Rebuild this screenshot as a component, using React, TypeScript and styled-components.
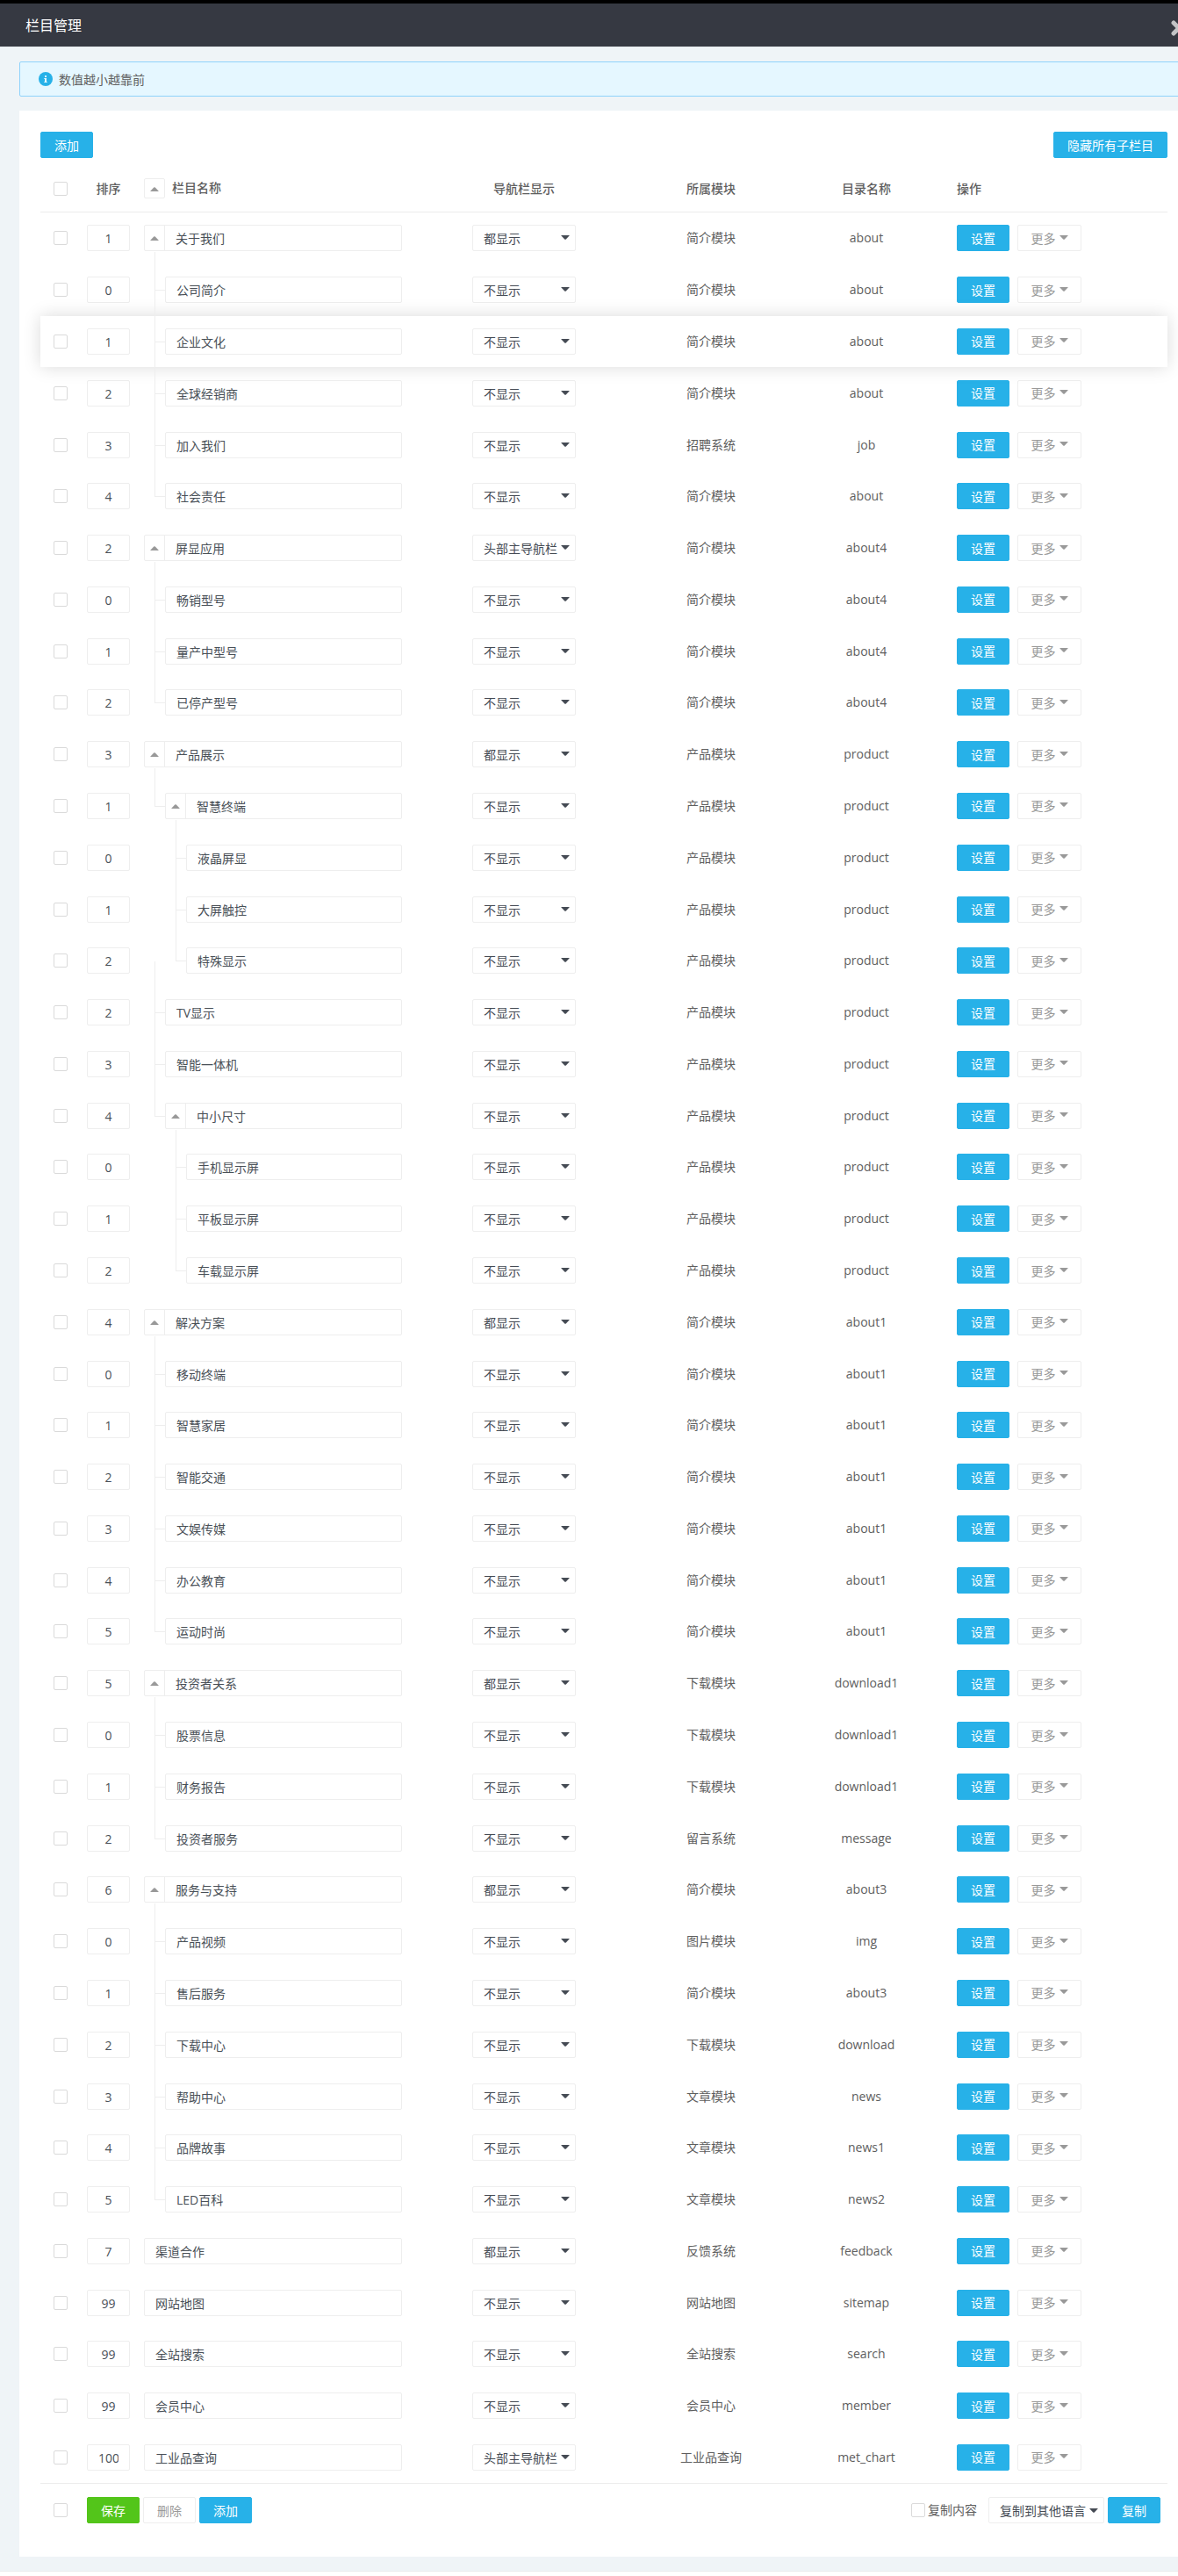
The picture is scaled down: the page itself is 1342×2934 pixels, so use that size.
import React from 'react';
import styled, { createGlobalStyle } from 'styled-components';

const BLUE = '#27b1e8';
const LINE = '#eeeeee';
const ROW_H = 58.78125;

const GlobalStyle = createGlobalStyle`
  *, *::before, *::after { box-sizing: border-box; }
  body {
    margin: 0;
    background: #fff;
    color: #5e5e5e;
    font: 14px/20px "Open Sans", "Noto Sans CJK SC", sans-serif;
    overflow: hidden;
  }
`;

const Page = styled.div`
  width: 1342px;
  height: 2934px;
  overflow: hidden;
`;

const TopBar = styled.header`
  display: flex;
  align-items: center;
  justify-content: space-between;
  height: 53px;
  padding: 1px 0 0 29px;
  border-top: 4px solid #000;
  background: #363942;
  color: #fff;
  font-size: 16px;
`;

const CloseIcon = styled.svg`
  flex: none;
  width: 18px;
  height: 18px;
  margin: 5px -10px 0 0;
  stroke: #c3c4c6;
  stroke-width: 5;
  stroke-linecap: round;
`;

const Body = styled.main`
  width: 1376px;
  height: 2876px;
  padding: 16px 22px;
  border-top: 1px solid #e6eaee;
  border-bottom: 1px solid #e9ebed;
  background: #eff4f7;
`;

const Notice = styled.div`
  display: flex;
  align-items: center;
  gap: 7px;
  height: 40px;
  padding-left: 21px;
  border: 1px solid #8fd3fb;
  border-radius: 2px;
  background: #e5f7ff;

  span { margin-top: 2px; }
`;

const Panel = styled.section`
  height: 2786px;
  margin-top: 16px;
  padding: 24px;
  background: #fff;
`;

const Toolbar = styled.div`
  display: flex;
  justify-content: space-between;
  height: 30px;
`;

type Tone = 'primary' | 'success' | 'plain';
const fills: Record<Tone, string> = { primary: BLUE, success: '#53c51a', plain: '#fff' };

const Button = styled.button<{ $tone?: Tone; $w?: number }>`
  display: flex;
  align-items: center;
  justify-content: center;
  flex: none;
  gap: 4px;
  width: ${(p) => p.$w ?? 60}px;
  height: 30px;
  padding: 1px 0 0;
  border: 1px solid ${(p) => (p.$tone === 'plain' ? LINE : fills[p.$tone ?? 'primary'])};
  border-radius: 2px;
  background: ${(p) => fills[p.$tone ?? 'primary']};
  color: ${(p) => (p.$tone === 'plain' ? '#999' : '#fff')};
  font: inherit;
`;

const columns = '53px 65px 374px 184px 176px 178px 1fr';

const HeadRow = styled.div`
  display: grid;
  grid-template-columns: ${columns};
  align-items: center;
  height: 62px;
  padding-top: 9px;
  border-bottom: 1px solid #ececec;
  font-weight: 500;
`;

const Row = styled.div<{ $active?: boolean }>`
  display: grid;
  grid-template-columns: ${columns};
  align-items: center;
  height: ${ROW_H}px;
  ${(p) =>
    p.$active &&
    'position: relative; background: #fff; box-shadow: 0 0 20px rgba(0, 0, 0, 0.15);'}
`;

const Check = styled.span<{ $ml?: number }>`
  flex: none;
  width: 16px;
  height: 16px;
  margin-left: ${(p) => p.$ml ?? 15}px;
  border: 1px solid #dadada;
  border-radius: 2px;
  background: #fff;
`;

const Center = styled.div<{ $w?: number }>`
  width: ${(p) => (p.$w ? `${p.$w}px` : 'auto')};
  text-align: center;
`;

const SortBox = styled.div`
  width: 49px;
  height: 30px;
  padding: 5px 12px 0;
  border: 1px solid ${LINE};
  border-radius: 2px;
  color: #495057;

  span {
    display: flex;
    justify-content: safe center;
    overflow: hidden;
  }
`;

const NameCell = styled.div<{ $level: number }>`
  position: relative;
  width: 294px;
  padding-left: ${(p) => p.$level * 24}px;
`;

const Branch = styled.i<{ $level: number; $first: boolean }>`
  position: absolute;
  z-index: 1;
  left: ${(p) => p.$level * 24 - 12}px;
  bottom: 14px;
  width: 12px;
  height: ${(p) => (p.$first ? ROW_H - 15 : ROW_H)}px;
  border-left: 1px solid ${LINE};
  border-bottom: 1px solid ${LINE};
`;

const NameBox = styled.div`
  display: flex;
  height: 30px;
  border: 1px solid ${LINE};
  border-radius: 2px;
  color: #495057;
`;

const NameText = styled.span`
  padding: 5px 0 0 12px;
`;

const Toggle = styled.div<{ $boxed?: boolean }>`
  display: flex;
  align-items: center;
  justify-content: center;
  flex: none;
  width: ${(p) => (p.$boxed ? 24 : 23)}px;
  height: ${(p) => (p.$boxed ? '23px' : '28px')};
  border: 0 solid ${LINE};
  border-width: ${(p) => (p.$boxed ? '1px' : '0 1px 0 0')};
  border-radius: ${(p) => (p.$boxed ? 2 : 0)}px;
  padding-top: ${(p) => (p.$boxed ? 2 : 1)}px;
  color: #999;
`;

const HeadName = styled.div`
  display: flex;
  align-items: center;
  gap: 8px;
  margin-top: -1px;
`;

const HeadText = styled.span`
  margin-top: -1px;
`;

const Select = styled.div<{ $w: number }>`
  display: flex;
  align-items: center;
  justify-content: space-between;
  width: ${(p) => p.$w}px;
  height: 30px;
  padding: 2px 6px 0 12px;
  border: 1px solid ${LINE};
  border-radius: 2px;
  background: #fff;
  color: #454b54;
  white-space: nowrap;
`;

const Arrow = styled.svg<{ $up?: boolean; $lift?: number }>`
  flex: none;
  width: 10px;
  height: 5px;
  margin-top: ${(p) => -(p.$lift ?? 0)}px;
  transform: ${(p) => (p.$up ? 'rotate(180deg)' : 'none')};
  fill: currentColor;
`;

const Actions = styled.div`
  display: flex;
  gap: 9px;
  padding-left: 14px;
`;

const Footer = styled.footer`
  display: flex;
  align-items: center;
  justify-content: space-between;
  height: 61px;
  padding: 0 8px 0 0;
  border-top: 1px solid #ececec;
`;

const Group = styled.div<{ $gap?: number }>`
  display: flex;
  align-items: center;
  gap: ${(p) => p.$gap ?? 4}px;
`;

const CopyLabel = styled.label`
  display: flex;
  align-items: center;
  gap: 3px;
  margin: -1px 9px 0 0;
`;

function Caret({ up, lift }: { up?: boolean; lift?: number }) {
  return (
    <Arrow $up={up} $lift={lift} viewBox="0 0 10 5">
      <path d="M.2 0h9.6Q9.5 .8 8.6 1.4L5.8 4.5Q5 5.2 4.2 4.5L1.4 1.4Q.5 .8 .2 0Z" />
    </Arrow>
  );
}

type Item = [sort: number, name: string, level: number, parent: boolean, nav: string, mod: string, dir: string];

const N = '不显示';
const A = '都显示';
const H = '头部主导航栏';
const J = '简介模块';
const P = '产品模块';
const D = '下载模块';
const W = '文章模块';

const items: Item[] = [
  [1, '关于我们', 0, true, A, J, 'about'],
  [0, '公司简介', 1, false, N, J, 'about'],
  [1, '企业文化', 1, false, N, J, 'about'],
  [2, '全球经销商', 1, false, N, J, 'about'],
  [3, '加入我们', 1, false, N, '招聘系统', 'job'],
  [4, '社会责任', 1, false, N, J, 'about'],
  [2, '屏显应用', 0, true, H, J, 'about4'],
  [0, '畅销型号', 1, false, N, J, 'about4'],
  [1, '量产中型号', 1, false, N, J, 'about4'],
  [2, '已停产型号', 1, false, N, J, 'about4'],
  [3, '产品展示', 0, true, A, P, 'product'],
  [1, '智慧终端', 1, true, N, P, 'product'],
  [0, '液晶屏显', 2, false, N, P, 'product'],
  [1, '大屏触控', 2, false, N, P, 'product'],
  [2, '特殊显示', 2, false, N, P, 'product'],
  [2, 'TV显示', 1, false, N, P, 'product'],
  [3, '智能一体机', 1, false, N, P, 'product'],
  [4, '中小尺寸', 1, true, N, P, 'product'],
  [0, '手机显示屏', 2, false, N, P, 'product'],
  [1, '平板显示屏', 2, false, N, P, 'product'],
  [2, '车载显示屏', 2, false, N, P, 'product'],
  [4, '解决方案', 0, true, A, J, 'about1'],
  [0, '移动终端', 1, false, N, J, 'about1'],
  [1, '智慧家居', 1, false, N, J, 'about1'],
  [2, '智能交通', 1, false, N, J, 'about1'],
  [3, '文娱传媒', 1, false, N, J, 'about1'],
  [4, '办公教育', 1, false, N, J, 'about1'],
  [5, '运动时尚', 1, false, N, J, 'about1'],
  [5, '投资者关系', 0, true, A, D, 'download1'],
  [0, '股票信息', 1, false, N, D, 'download1'],
  [1, '财务报告', 1, false, N, D, 'download1'],
  [2, '投资者服务', 1, false, N, '留言系统', 'message'],
  [6, '服务与支持', 0, true, A, J, 'about3'],
  [0, '产品视频', 1, false, N, '图片模块', 'img'],
  [1, '售后服务', 1, false, N, J, 'about3'],
  [2, '下载中心', 1, false, N, D, 'download'],
  [3, '帮助中心', 1, false, N, W, 'news'],
  [4, '品牌故事', 1, false, N, W, 'news1'],
  [5, 'LED百科', 1, false, N, W, 'news2'],
  [7, '渠道合作', 0, false, A, '反馈系统', 'feedback'],
  [99, '网站地图', 0, false, N, '网站地图', 'sitemap'],
  [99, '全站搜索', 0, false, N, '全站搜索', 'search'],
  [99, '会员中心', 0, false, N, '会员中心', 'member'],
  [100, '工业品查询', 0, false, H, '工业品查询', 'met_chart'],
];

export default function App() {
  return (
    <Page>
      <GlobalStyle />
      <TopBar>
        <span>栏目管理</span>
        <CloseIcon viewBox="0 0 18 18">
          <path d="M3 3l12 12M15 3L3 15" />
        </CloseIcon>
      </TopBar>
      <Body>
        <Notice>
          <svg width="16" height="16" viewBox="0 0 16 16">
            <circle cx="8" cy="8" r="8" fill={BLUE} />
            <path d="M7 4h2v2H7zM6.3 7H9v4h.7v1H6.3v-1H7V8h-.7z" fill="#e5f7ff" />
          </svg>
          <span>数值越小越靠前</span>
        </Notice>
        <Panel>
          <Toolbar>
            <Button>添加</Button>
            <Button $w={130}>隐藏所有子栏目</Button>
          </Toolbar>
          <HeadRow>
            <Check />
            <Center $w={49}>排序</Center>
            <HeadName>
              <Toggle $boxed>
                <Caret up />
              </Toggle>
              <HeadText>栏目名称</HeadText>
            </HeadName>
            <Center $w={118}>导航栏显示</Center>
            <Center>所属模块</Center>
            <Center>目录名称</Center>
            <Actions>操作</Actions>
          </HeadRow>
          {items.map(([sort, name, level, parent, nav, mod, dir], i) => (
            <Row key={i} $active={i === 2}>
              <Check />
              <SortBox><span>{sort}</span></SortBox>
              <NameCell $level={level}>
                {level > 0 && <Branch $level={level} $first={items[i - 1][3]} />}
                <NameBox>
                  {parent && (
                    <Toggle>
                      <Caret up />
                    </Toggle>
                  )}
                  <NameText>{name}</NameText>
                </NameBox>
              </NameCell>
              <Select $w={118}>
                {nav}
                <Caret lift={3} />
              </Select>
              <Center>{mod}</Center>
              <Center>{dir}</Center>
              <Actions>
                <Button>设置</Button>
                <Button $tone="plain" $w={73}>
                  更多
                  <Caret lift={3} />
                </Button>
              </Actions>
            </Row>
          ))}
          <Footer>
            <Group $gap={22}>
              <Check />
              <Group>
                <Button $tone="success">保存</Button>
                <Button $tone="plain">删除</Button>
                <Button>添加</Button>
              </Group>
            </Group>
            <Group>
              <CopyLabel>
                <Check $ml={0} />
                复制内容
              </CopyLabel>
              <Select $w={132}>
                复制到其他语言
                <Caret lift={2} />
              </Select>
              <Button>复制</Button>
            </Group>
          </Footer>
        </Panel>
      </Body>
    </Page>
  );
}
